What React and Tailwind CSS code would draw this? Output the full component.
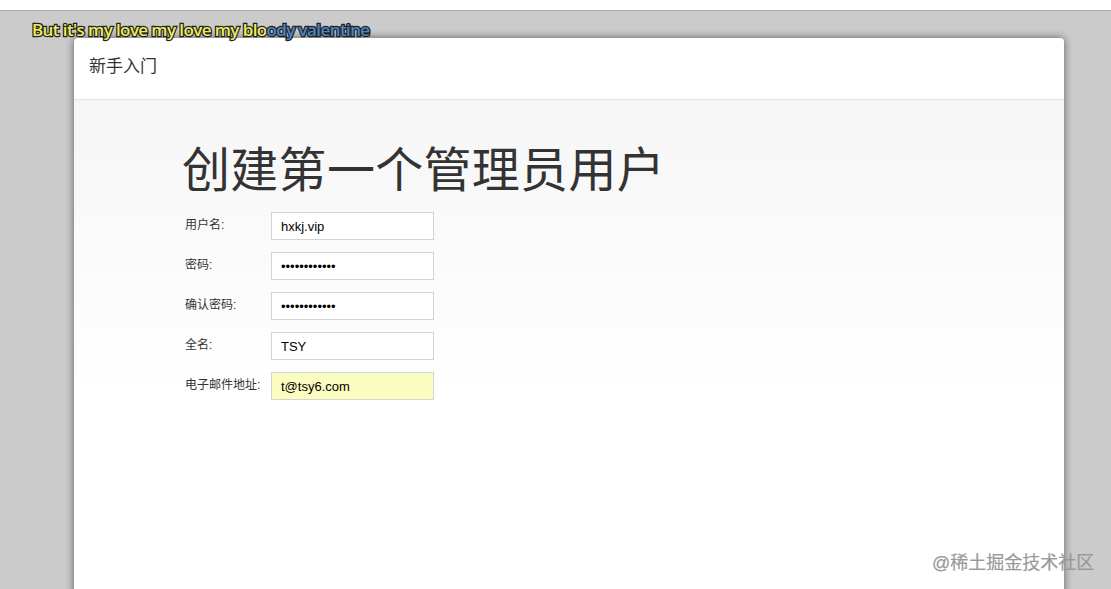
import React from "react";

const fields = [
  { label: "用户名:", value: "hxkj.vip", type: "text" },
  { label: "密码:", value: "hxkjvip12345", type: "password" },
  { label: "确认密码:", value: "hxkjvip12345", type: "password" },
  { label: "全名:", value: "TSY", type: "text" },
  { label: "电子邮件地址:", value: "t@tsy6.com", type: "text", autofill: true },
];

const font = "font-['Liberation_Sans','Noto_Sans_CJK_SC',sans-serif]";

function App() {
  return (
    <div className={`relative h-[589px] w-[1111px] overflow-hidden bg-[#cbcbcb] ${font}`}>
      {/* browser strip */}
      <div className="h-[11px] bg-white border-b border-[#a9a9a9]" />

      {/* lyric overlay */}
      <div className="absolute left-[32px] top-[21px] z-10 font-['Open_Sans',sans-serif] text-[17px] font-semibold leading-none tracking-[-0.6px] [-webkit-text-stroke:2.5px_#222] [paint-order:stroke_fill]">
        <span className="text-[#eeec5c]">But it's my love my love my blo</span>
        <span className="text-[#4a86c4]">ody valentine</span>
      </div>

      <div className="mx-[74px] mt-[27px] h-[600px] w-[990px] rounded-t-[4px] bg-white shadow-[0_0_8px_rgba(0,0,0,0.55)]">
        <div className="flex h-[62px] items-center border-b border-[#e6e6e6] px-[15px] pb-[4px]">
          <span className="text-[17px] text-[#333]">新手入门</span>
        </div>

        <div className="h-[540px] bg-gradient-to-b from-[#f6f6f6] to-white to-[55%] pl-[108px] pt-[42px]">
          <h1 className="text-[48px] font-normal leading-[58px] text-[#333] tracking-[0.3px]">
            创建第一个管理员用户
          </h1>

          <div className="mt-[12px] flex flex-col gap-[12px] pl-[3px]">
            {fields.map((f) => (
              <div key={f.label} className="flex items-start">
                <label className="w-[86px] pt-[4px] text-[12px] text-[#333]">
                  {f.label}
                </label>
                <input
                  type={f.type}
                  defaultValue={f.value}
                  readOnly
                  className={`h-[28px] w-[163px] border border-[#d4d4d4] px-[9px] text-[13px] text-black outline-none ${
                    f.autofill ? "bg-[#fbfdc0]" : "bg-white"
                  }`}
                />
              </div>
            ))}
          </div>
        </div>
      </div>

      <div className="absolute left-[932px] top-[550px] text-[18px] text-[#999] [-webkit-text-stroke:0.2px_#999]">
        @稀土掘金技术社区
      </div>
    </div>
  );
}

export default App;
